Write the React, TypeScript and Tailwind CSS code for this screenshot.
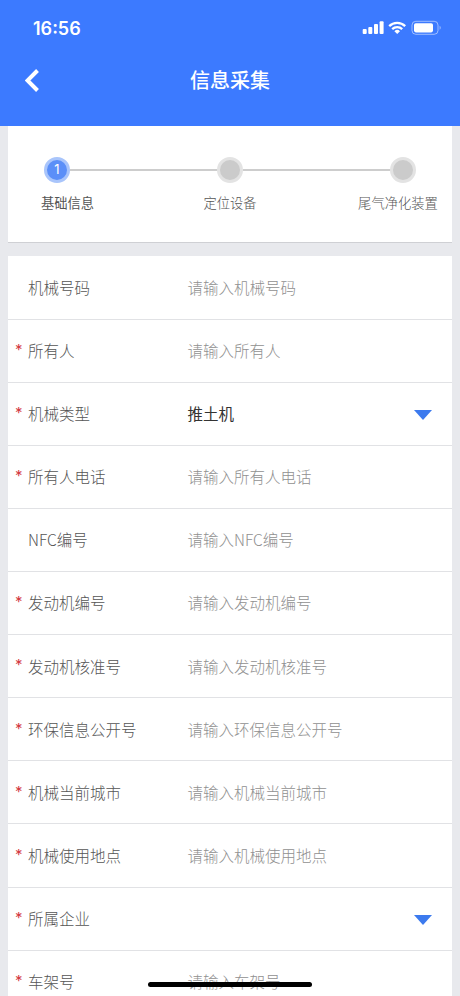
import clsx from 'clsx'

type Field = {
  label: string
  required?: boolean
  value?: string
  select?: boolean
}

const STEPS = ['基础信息', '定位设备', '尾气净化装置']

const FIELDS: Field[] = [
  { label: '机械号码' },
  { label: '所有人', required: true },
  { label: '机械类型', required: true, select: true, value: '推土机' },
  { label: '所有人电话', required: true },
  { label: 'NFC编号' },
  { label: '发动机编号', required: true },
  { label: '发动机核准号', required: true },
  { label: '环保信息公开号', required: true },
  { label: '机械当前城市', required: true },
  { label: '机械使用地点', required: true },
  { label: '所属企业', required: true, select: true },
  { label: '车架号', required: true },
]

function StatusIcons() {
  return (
    <svg width="80" height="16" viewBox="0 0 80 16" fill="none" className="shrink-0">
      <g fill="#fff">
        <rect x="0.7" y="9" width="4" height="5" rx="1" />
        <rect x="6.3" y="7" width="4" height="7" rx="1" />
        <rect x="12" y="4" width="4" height="10" rx="1" />
        <rect x="17.6" y="1.3" width="4" height="12.7" rx="1" />
      </g>
      <g stroke="#fff" strokeWidth="2.3">
        <path d="M27.2 6.1a11.4 11.4 0 0 1 16 0" />
        <path d="M30.2 9.1a7.1 7.1 0 0 1 10 0" />
      </g>
      <path d="M32.4 11.2a4 4 0 0 1 5.6 0l-2.8 2.9z" fill="#fff" />
      <rect x="50" y="1.3" width="26" height="13" rx="3.8" stroke="#fff" strokeOpacity="0.5" />
      <rect x="52" y="3.2" width="19" height="9.2" rx="1.8" fill="#fff" />
      <path d="M77.6 5.8c1.5.5 1.5 3.5 0 4z" fill="#fff" fillOpacity="0.5" />
    </svg>
  )
}

function Header() {
  return (
    <header className="h-[125.5px] shrink-0 bg-[#3c7aff] text-white">
      <div className="flex h-[56px] items-center justify-between pl-[33px] pr-[18px]">
        <span className="font-['Inter'] text-[18px] font-semibold">16:56</span>
        <StatusIcons />
      </div>
      <div className="grid h-12 grid-cols-3 items-center">
        <svg width="14" height="23" viewBox="0 0 14 23" fill="none" className="ml-[24.5px]">
          <path d="M12.5 1.5 2.5 11.5 12.5 21.5" stroke="#fff" strokeWidth="4" />
        </svg>
        <h1 className="text-center text-[20px] font-medium">信息采集</h1>
      </div>
    </header>
  )
}

function Stepper() {
  return (
    <section className="mx-2 flex h-[117.5px] shrink-0 justify-between border-b border-[#cfd0d4] bg-white px-[8.5px] pt-[31.5px]">
      {STEPS.map((step, i) => (
        <div key={step} className="contents">
          {i > 0 && <div className="-mx-[28px] mt-[12px] h-[1.5px] flex-1 bg-[#cdcdcd]" />}
          <div className="flex w-[81px] flex-col items-center">
            <span
              className={clsx(
                "flex size-[26px] items-center justify-center rounded-full border-[3.5px] font-['Inter'] text-[13px] text-white",
                i === 0 ? 'border-[#a9c5fb] bg-[#5b8ff8]' : 'border-[#e3e3e3] bg-[#cbcbcb]',
              )}
            >
              {i === 0 && 1}
            </span>
            <span
              className={clsx(
                'mt-[10px] whitespace-nowrap text-[13.3px] leading-[20px]',
                i === 0 ? 'ml-[21px] font-normal text-[#555]' : 'font-light text-[#555]',
                i === 2 && 'ml-[-10px]',
              )}
            >
              {step}
            </span>
          </div>
        </div>
      ))}
    </section>
  )
}

function FieldRow({ label, required, value, select }: Field) {
  return (
    <div className="flex h-[63.12px] shrink-0 items-center border-b border-[#e1e2e5] text-[15.5px]">
      <span className="w-5 pb-px pl-[7px] font-['Inter'] text-[15px] text-[#d33a42]">
        {required && '*'}
      </span>
      <span className="w-[159.5px] font-light text-[#555]">{label}</span>
      <span className={clsx('flex-1', value ? 'text-[#333]' : 'font-light text-[#909090]')}>
        {value ?? (select ? '' : `请输入${label}`)}
      </span>
      {select && (
        <svg width="18" height="10" viewBox="0 0 18 10" className="mr-5 mt-0.5">
          <path d="M0 0h18L9 10z" fill="#3c7aee" />
        </svg>
      )}
    </div>
  )
}

export default function App() {
  return (
    <div className="relative flex h-[996px] flex-col overflow-hidden bg-[#e8e9ed] font-['Noto_Sans_CJK_SC',sans-serif]">
      <Header />
      <Stepper />
      <main className="mx-2 mt-[13px] flex flex-col bg-white pt-[0.5px]">
        {FIELDS.map((field) => (
          <FieldRow key={field.label} {...field} />
        ))}
      </main>
      <div className="absolute bottom-[9px] left-[148px] h-[5px] w-[164px] rounded-full bg-black" />
    </div>
  )
}
